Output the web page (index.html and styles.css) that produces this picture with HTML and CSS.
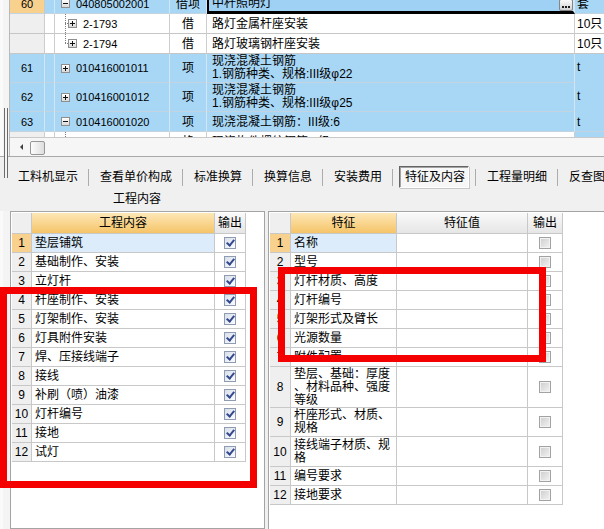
FILE: index.html
```html
<!DOCTYPE html>
<html lang="zh-CN">
<head>
<meta charset="utf-8">
<link rel="stylesheet" href="styles.css">
</head>
<body>
<div class="top">
  <div class="gutter"></div>
  <div class="topmain">
    <div class="gridview">
      <div class="grid">
        <div class="grow sel">
          <div class="gc num cur">60</div><div class="gc tree"></div>
          <div class="gc code"><span class="pm minus"></span><span>040805002001</span></div>
          <div class="gc type">借项</div>
          <div class="gc name edit"><span>中杆照明灯</span><span class="dots"></span></div>
          <div class="gc unit">套</div>
        </div>
        <div class="grow">
          <div class="gc num"></div><div class="gc tree"></div>
          <div class="gc code child"><span class="tline"></span><span class="pm plus"></span><span>2-1793</span></div>
          <div class="gc type">借</div>
          <div class="gc name">路灯金属杆座安装</div>
          <div class="gc unit">10只</div>
        </div>
        <div class="grow">
          <div class="gc num"></div><div class="gc tree"></div>
          <div class="gc code child"><span class="tline last"></span><span class="pm plus"></span><span>2-1794</span></div>
          <div class="gc type">借</div>
          <div class="gc name">路灯玻璃钢杆座安装</div>
          <div class="gc unit">10只</div>
        </div>
        <div class="grow sel tall">
          <div class="gc num">61</div><div class="gc tree"></div>
          <div class="gc code"><span class="pm plus"></span><span>010416001011</span></div>
          <div class="gc type">项</div>
          <div class="gc name"><span class="ml">现浇混凝土钢筋</span><span class="ml">1.钢筋种类、规格:III级φ22</span></div>
          <div class="gc unit top">t</div>
        </div>
        <div class="grow sel tall">
          <div class="gc num">62</div><div class="gc tree"></div>
          <div class="gc code"><span class="pm plus"></span><span>010416001012</span></div>
          <div class="gc type">项</div>
          <div class="gc name"><span class="ml">现浇混凝土钢筋</span><span class="ml">1.钢筋种类、规格:III级φ25</span></div>
          <div class="gc unit top">t</div>
        </div>
        <div class="grow sel">
          <div class="gc num">63</div><div class="gc tree"></div>
          <div class="gc code"><span class="pm minus"></span><span>010416001020</span></div>
          <div class="gc type">项</div>
          <div class="gc name">现浇混凝土钢筋：III级:6</div>
          <div class="gc unit">t</div>
        </div>
        <div class="grow">
          <div class="gc num"></div><div class="gc tree"></div>
          <div class="gc code child"><span class="tline"></span><span class="pm plus"></span><span>5-1296</span></div>
          <div class="gc type">格</div>
          <div class="gc name">现浇构件螺纹钢筋III级φ6</div>
          <div class="gc unit">t</div>
        </div>
      </div>
    </div>
    <div class="hscroll"><span class="larrow"></span><span class="thumb"></span></div>
  </div>
</div>

<div class="toolbar">
  <div class="tabs">
    <span class="tab">工料机显示</span><span class="sep"></span>
    <span class="tab">查看单价构成</span><span class="sep"></span>
    <span class="tab">标准换算</span><span class="sep"></span>
    <span class="tab">换算信息</span><span class="sep"></span>
    <span class="tab">安装费用</span><span class="sep"></span>
    <span class="tab active">特征及内容</span><span class="sep"></span>
    <span class="tab">工程量明细</span><span class="sep"></span>
    <span class="tab">反查图</span>
  </div>
  <div class="tb2">工程内容</div>
</div>

<div class="lower">
  <div class="lgut"></div>
  <div class="lpanel">
    <div class="tbl tl">
      <div class="r h"><div class="c num"></div><div class="c hmain">工程内容</div><div class="c hgray">输出</div></div>
      <div class="r"><div class="c num cur">1</div><div class="c txt hl">垫层铺筑</div><div class="c out"><span class="cb on"></span></div></div>
      <div class="r"><div class="c num">2</div><div class="c txt">基础制作、安装</div><div class="c out"><span class="cb on"></span></div></div>
      <div class="r"><div class="c num">3</div><div class="c txt">立灯杆</div><div class="c out"><span class="cb on"></span></div></div>
      <div class="r"><div class="c num">4</div><div class="c txt">杆座制作、安装</div><div class="c out"><span class="cb on"></span></div></div>
      <div class="r"><div class="c num">5</div><div class="c txt">灯架制作、安装</div><div class="c out"><span class="cb on"></span></div></div>
      <div class="r"><div class="c num">6</div><div class="c txt">灯具附件安装</div><div class="c out"><span class="cb on"></span></div></div>
      <div class="r"><div class="c num">7</div><div class="c txt">焊、压接线端子</div><div class="c out"><span class="cb on"></span></div></div>
      <div class="r"><div class="c num">8</div><div class="c txt">接线</div><div class="c out"><span class="cb on"></span></div></div>
      <div class="r"><div class="c num">9</div><div class="c txt">补刷（喷）油漆</div><div class="c out"><span class="cb on"></span></div></div>
      <div class="r"><div class="c num">10</div><div class="c txt">灯杆编号</div><div class="c out"><span class="cb on"></span></div></div>
      <div class="r"><div class="c num">11</div><div class="c txt">接地</div><div class="c out"><span class="cb on"></span></div></div>
      <div class="r"><div class="c num">12</div><div class="c txt">试灯</div><div class="c out"><span class="cb on"></span></div></div>
    </div>
  </div>
  <div class="rpanel">
    <div class="tbl tr">
      <div class="r h"><div class="c num"></div><div class="c hmain">特征</div><div class="c hgray">特征值</div><div class="c hgray">输出</div></div>
      <div class="r"><div class="c num cur">1</div><div class="c txt hl">名称</div><div class="c"></div><div class="c out"><span class="cb"></span></div></div>
      <div class="r"><div class="c num">2</div><div class="c txt">型号</div><div class="c"></div><div class="c out"><span class="cb"></span></div></div>
      <div class="r"><div class="c num">3</div><div class="c txt">灯杆材质、高度</div><div class="c"></div><div class="c out"><span class="cb"></span></div></div>
      <div class="r"><div class="c num">4</div><div class="c txt">灯杆编号</div><div class="c"></div><div class="c out"><span class="cb"></span></div></div>
      <div class="r"><div class="c num">5</div><div class="c txt">灯架形式及臂长</div><div class="c"></div><div class="c out"><span class="cb"></span></div></div>
      <div class="r"><div class="c num">6</div><div class="c txt">光源数量</div><div class="c"></div><div class="c out"><span class="cb"></span></div></div>
      <div class="r"><div class="c num">7</div><div class="c txt">附件配置</div><div class="c"></div><div class="c out"><span class="cb"></span></div></div>
      <div class="r r3"><div class="c num">8</div><div class="c txt">垫层、基础：厚度<br>、材料品种、强度<br>等级</div><div class="c"></div><div class="c out"><span class="cb"></span></div></div>
      <div class="r r2"><div class="c num">9</div><div class="c txt">杆座形式、材质、<br>规格</div><div class="c"></div><div class="c out"><span class="cb"></span></div></div>
      <div class="r r2b"><div class="c num">10</div><div class="c txt">接线端子材质、规<br>格</div><div class="c"></div><div class="c out"><span class="cb"></span></div></div>
      <div class="r"><div class="c num">11</div><div class="c txt">编号要求</div><div class="c"></div><div class="c out"><span class="cb"></span></div></div>
      <div class="r"><div class="c num">12</div><div class="c txt">接地要求</div><div class="c"></div><div class="c out"><span class="cb"></span></div></div>
    </div>
  </div>
</div>

<div class="vthumb"></div>
<div class="mark m1"></div>
<div class="mark m2"></div>
</body>
</html>
```

FILE: styles.css
```css
* { box-sizing: border-box; }
html, body { margin: 0; padding: 0; }
body {
  width: 604px;
  height: 529px;
  overflow: hidden;
  position: relative;
  background: #f0f0f0;
  color: #000;
  font-family: "Liberation Sans", "Noto Sans CJK SC", sans-serif;
  font-size: 12px;
  line-height: 14px;
}

/* ---------- top grid ---------- */
.top {
  display: flex;
  height: 157px;
  border-bottom: 1px solid #a9a9a9;
}
.gutter {
  width: 10px;
  flex: none;
  background: #f4f4f4;
  border-left: 3px solid #fafafa;
  border-right: 1px solid #b9b9b9;
}
.topmain {
  flex: 1;
  min-width: 0;
  display: flex;
  flex-direction: column;
  overflow: hidden;
  background: #fff;
}
.gridview {
  height: 137px;
  overflow: hidden;
  flex: none;
}
.grid {
  margin-top: -6px;
  width: 606px;
}
.grow {
  display: grid;
  grid-template-columns: 35px 10px 115px 37px 368px 41px;
  grid-template-rows: 20px;
  align-items: stretch;
  background: #fff;
}
.grow.tall { grid-template-rows: 29px; }
.gc {
  display: flex;
  align-items: center;
  min-height: 0;
  white-space: nowrap;
  overflow: hidden;
  border-right: 1px solid #cdcdcd;
  border-bottom: 1px solid #c6c6c6;
}
.gc.num { justify-content: center; background: #efefef; font-size: 11px; }
.gc.code { padding-left: 6px; font-size: 11px; }
.gc.code.child { padding-left: 10px; }
.gc.type { justify-content: center; }
.gc.name { padding-left: 5px; }
.tall .gc.name {
  flex-direction: column;
  align-items: flex-start;
  justify-content: center;
}
.ml { display: block; line-height: 13px; height: 13px; }
.gc.unit { padding-left: 2px; }
.gc.unit.top { align-items: flex-start; padding-top: 6px; }

.grow.sel .gc {
  background: #a8d7f6;
  border-right-color: #d3e6f5;
  border-bottom-color: #c3d3df;
}
.grow.sel .gc.num.cur { background: #f8d18e; border-right-color: #c9c9c9; }

.gc.edit {
  border-left: 2px solid #000;
  border-right: 2px solid #000;
  border-bottom: 3px solid #000 !important;
  justify-content: space-between;
  padding-left: 3px;
  background: #9fd1f4 !important;
}
.dots {
  align-self: flex-end;
  width: 14px;
  height: 12px;
  border: 1px solid #858585;
  border-radius: 2px;
  background:
    linear-gradient(#1e1e1e, #1e1e1e) 2px 6px / 2px 2px no-repeat,
    linear-gradient(#1e1e1e, #1e1e1e) 5px 6px / 2px 2px no-repeat,
    linear-gradient(#1e1e1e, #1e1e1e) 8px 6px / 2px 2px no-repeat,
    linear-gradient(#fbfbfb, #d2d2d2);
}

.pm {
  flex: none;
  width: 9px;
  height: 9px;
  margin-right: 6px;
  border: 1px solid #8f8f8f;
  background:
    linear-gradient(#111, #111) 1px 3px / 5px 1px no-repeat,
    linear-gradient(#ffffff, #d9d9d9);
}
.pm.plus {
  background:
    linear-gradient(#111, #111) 1px 3px / 5px 1px no-repeat,
    linear-gradient(#111, #111) 3px 1px / 1px 5px no-repeat,
    linear-gradient(#ffffff, #d9d9d9);
}
.tline {
  flex: none;
  align-self: stretch;
  width: 3px;
  background:
    repeating-linear-gradient(#7d7d7d 0 1px, transparent 1px 2px) left top / 1px 100% no-repeat,
    repeating-linear-gradient(90deg, #7d7d7d 0 1px, transparent 1px 2px) left 9px / 100% 1px no-repeat;
}
.tline.last {
  background:
    repeating-linear-gradient(#7d7d7d 0 1px, transparent 1px 2px) left top / 1px 10px no-repeat,
    repeating-linear-gradient(90deg, #7d7d7d 0 1px, transparent 1px 2px) left 9px / 100% 1px no-repeat;
}

.hscroll {
  height: 19px;
  flex: none;
  display: flex;
  align-items: flex-end;
  padding-left: 10px;
  padding-bottom: 1px;
  background: #f6f6f6;
  border-top: 1px solid #c9c9c9;
}
.larrow {
  width: 0;
  height: 0;
  margin-bottom: 5px;
  border-top: 3px solid transparent;
  border-bottom: 3px solid transparent;
  border-right: 3px solid #404040;
}
.thumb {
  width: 15px;
  height: 14px;
  margin-left: 7px;
  border: 1px solid #979797;
  border-radius: 2px;
  background: linear-gradient(90deg, #fdfdfd, #dedede);
}

/* ---------- toolbar ---------- */
.toolbar {
  height: 54px;
  padding-top: 9px;
}
.tabs {
  display: flex;
  align-items: center;
  height: 22px;
  padding-left: 7px;
  white-space: nowrap;
}
.tab {
  padding: 0 10px 0 11px;
  line-height: 20px;
}
.tab.active {
  height: 22px;
  margin: 0 6px 0 6px;
  padding: 0 3px 0 5px;
  border: 1px solid;
  border-color: #646464 #ffffff #ffffff #646464;
  box-shadow: inset 1px 1px 0 #a3a3a3, 1px 1px 0 #c7c7c7;
  background: #f7f7f7;
}
.sep {
  width: 1px;
  height: 17px;
  background: #acacac;
  flex: none;
}
.tb2 {
  padding-left: 113px;
  margin-top: 3px;
  line-height: 16px;
}

/* ---------- lower panels ---------- */
.lower {
  display: flex;
  height: 318px;
}
.lgut {
  width: 10px;
  flex: none;
  background: #f4f4f4;
  border-left: 3px solid #fafafa;
}
.lpanel {
  width: 255px;
  flex: none;
  background: #fff;
  border: 1px solid #a4a4a4;
  padding: 1px;
}
.rpanel {
  flex: 1;
  margin-left: 3px;
  background: #fff;
  border-left: 1px solid #a4a4a4;
  border-top: 1px solid #a4a4a4;
  padding: 1px 0 0 1px;
}
.tbl .r {
  display: grid;
  grid-template-rows: 19px;
}
.tl .r { grid-template-columns: 20px 183px 31px; }
.tr .r { grid-template-columns: 21px 106px 131px 35px; }
.tbl .r.h { grid-template-rows: 21px; }
.tbl .r.r3 { grid-template-rows: 41px; }
.tbl .r.r2 { grid-template-rows: 29px; }
.tbl .r.r2b { grid-template-rows: 30px; }

.c {
  display: flex;
  align-items: center;
  border-right: 1px solid #c8c8c8;
  border-bottom: 1px solid #c8c8c8;
  overflow: hidden;
  white-space: nowrap;
}
.c.num {
  justify-content: center;
  background: #efefef;
}
.c.num.cur { background: #f8d18e; }
.c.txt { padding-left: 3px; line-height: 13px; }
.c.hl { background: #dcecfb; }
.c.out { justify-content: center; }
.h .c { justify-content: center; }
.h .c.num { background: #efefef; }
.h .c.hmain { background: linear-gradient(#fde7b6, #f5c468); }
.h .c.hgray { background: linear-gradient(#f9f9f9, #e6e6e6); }

.cb {
  width: 12px;
  height: 12px;
  border: 1px solid #a2a2a2;
  background: linear-gradient(135deg, #cdcdcd, #f3f3f3);
  box-shadow: inset 0 0 0 1px #f2f2f2;
  display: flex;
  align-items: center;
  justify-content: center;
}
.cb.on {
  border-color: #8e9bb0;
  background: linear-gradient(135deg, #d8dfea, #fbfcfe);
  box-shadow: none;
}
.cb.on::after {
  content: "";
  width: 3px;
  height: 6px;
  margin-top: -2px;
  border-right: 2px solid #34488d;
  border-bottom: 2px solid #34488d;
  transform: rotate(40deg);
}

/* ---------- overlays ---------- */
.vthumb {
  position: absolute;
  left: 4px;
  top: 108px;
  width: 4px;
  height: 70px;
  border-left: 1px solid #6c6c6c;
  border-right: 1px solid #6c6c6c;
  background: #f4f4f4;
}
.mark {
  position: absolute;
  border: 7px solid #f40000;
}
.m1 { left: 0; top: 287px; width: 257px; height: 201px; }
.m2 { left: 278px; top: 267px; width: 268px; height: 95px; }
```
